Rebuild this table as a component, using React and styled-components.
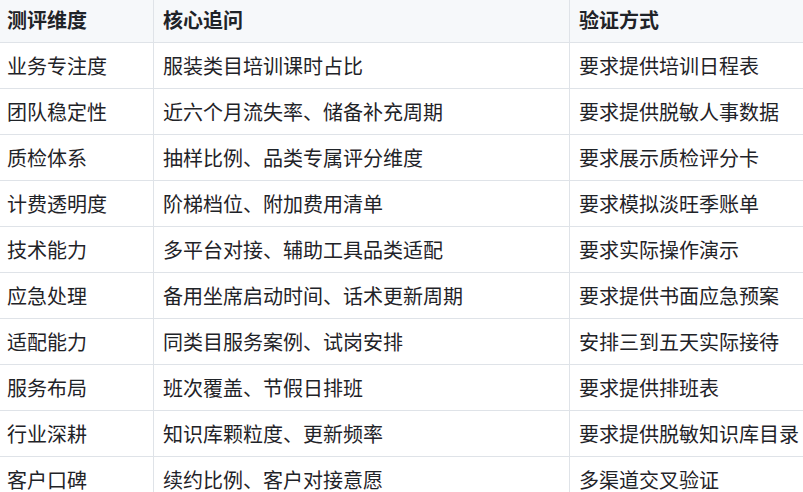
import styled, { createGlobalStyle } from "styled-components";

const rows = [
  ["业务专注度", "服装类目培训课时占比", "要求提供培训日程表"],
  ["团队稳定性", "近六个月流失率、储备补充周期", "要求提供脱敏人事数据"],
  ["质检体系", "抽样比例、品类专属评分维度", "要求展示质检评分卡"],
  ["计费透明度", "阶梯档位、附加费用清单", "要求模拟淡旺季账单"],
  ["技术能力", "多平台对接、辅助工具品类适配", "要求实际操作演示"],
  ["应急处理", "备用坐席启动时间、话术更新周期", "要求提供书面应急预案"],
  ["适配能力", "同类目服务案例、试岗安排", "安排三到五天实际接待"],
  ["服务布局", "班次覆盖、节假日排班", "要求提供排班表"],
  ["行业深耕", "知识库颗粒度、更新频率", "要求提供脱敏知识库目录"],
  ["客户口碑", "续约比例、客户对接意愿", "多渠道交叉验证"],
];

export default function App() {
  return (
    <>
      <GlobalStyle />
      <Table>
        <HeadCell>测评维度</HeadCell>
        <HeadCell>核心追问</HeadCell>
        <HeadCell>验证方式</HeadCell>
        {rows.map((row) =>
          row.map((text, i) => <Cell key={row[0] + i}>{text}</Cell>)
        )}
      </Table>
    </>
  );
}

const GlobalStyle = createGlobalStyle`
  * {
    box-sizing: border-box;
  }
  body {
    margin: 0;
    overflow: hidden;
    background: #ffffff;
    font-family: "Noto Sans CJK SC", "Noto Sans", sans-serif;
    color: #1f2328;
  }
`;

const Table = styled.div`
  display: grid;
  grid-template-columns: 154px 416px 236px;
  width: 806px;
`;

const Cell = styled.div`
  height: 46px;
  display: flex;
  align-items: center;
  padding: 0 9px;
  border-right: 1px solid #dfe3e8;
  border-bottom: 1px solid #dfe3e8;
  font-size: 20px;
  white-space: nowrap;
  &:nth-child(3n + 1) {
    padding-left: 7px;
  }
`;

const HeadCell = styled(Cell)`
  height: 43px;
  padding-bottom: 4px;
  background: #f6f8fa;
  font-weight: 700;
`;
